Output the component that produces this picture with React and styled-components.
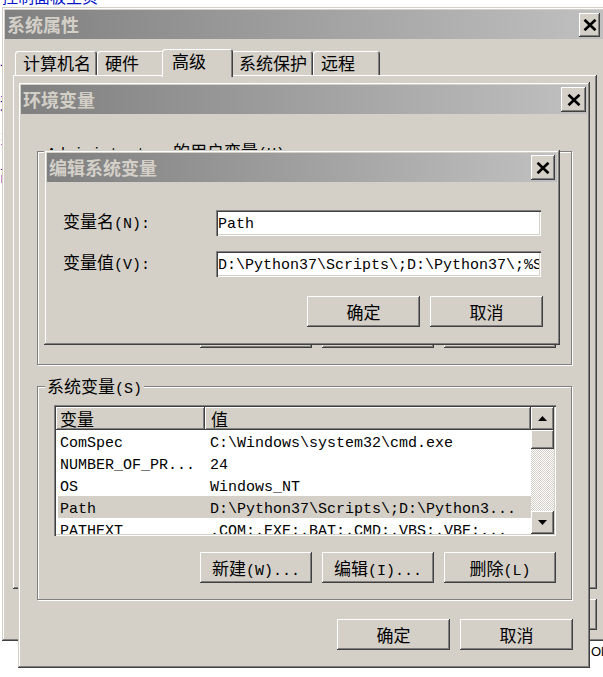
import React from "react";
import styled, { createGlobalStyle } from "styled-components";

const FACE = "#d4d0c8";
const CJK = `"Noto Sans CJK SC", "Noto Sans CJK JP", sans-serif`;
const MONO = `"Liberation Mono", "Noto Sans CJK SC", monospace`;

const RAISED = `inset -1px -1px #404040, inset 1px 1px #fff, inset -2px -2px #808080, inset 2px 2px ${FACE}`;
const SUNKEN = `inset 1px 1px #808080, inset 2px 2px #404040, inset -1px -1px #fff, inset -2px -2px ${FACE}`;

const GlobalStyle = createGlobalStyle`
  *, *::before, *::after { box-sizing: border-box; }
  html, body { margin: 0; padding: 0; background: #fff; }
  body {
    width: 603px; height: 677px; overflow: hidden;
    font-family: ${MONO}; font-size: 15px; color: #000;
  }
`;

const Desktop = styled.div`
  position: relative;
  width: 603px;
  height: 677px;
  overflow: hidden;
  background: #fff;
`;

const Sidebar = styled.nav`
  display: flex;
  flex-direction: column;
  gap: 20px;
`;

const HomeLink = styled.a`
  display: block;
  margin: -12px 0 0 2px;
  height: 50px;
  font: 16px/16px ${CJK};
  color: #0a14c8;
`;

const SideLink = styled.a`
  display: block;
  font: 16px/16px ${CJK};
  color: #0a14c8;
`;

const StrayText = styled.span`
  position: absolute;
  left: 591px;
  top: 644px;
  font: 13px/16px "Liberation Sans", sans-serif;
  color: #000;
`;

const Window = styled.section`
  position: absolute;
  left: ${(p) => p.$x}px;
  top: ${(p) => p.$y}px;
  width: ${(p) => p.$w}px;
  height: ${(p) => p.$h}px;
  display: flex;
  flex-direction: column;
  padding: 3px;
  background: ${FACE};
  box-shadow: inset -1px -1px #404040, inset 1px 1px ${FACE}, inset -2px -2px #808080, inset 2px 2px #fff;
`;

const TitleBar = styled.header`
  flex: none;
  height: 29px;
  display: flex;
  align-items: center;
  justify-content: space-between;
  padding: 0 ${(p) => p.$padRight}px 0 2px;
  background: linear-gradient(to right, #808080, #c0c0c0);
`;

const Title = styled.h1`
  margin: 0;
  font: bold 18px/29px ${CJK};
  color: ${FACE};
`;

const CloseButton = styled.button`
  width: ${(p) => p.$w}px;
  height: ${(p) => p.$h}px;
  padding: 0;
  border: 0;
  display: flex;
  align-items: center;
  justify-content: center;
  background: ${FACE};
  box-shadow: ${RAISED};
`;

const Zh = styled.span`
  font-family: ${CJK};
  font-size: 17px;
`;

const PushButton = styled.button`
  flex: none;
  width: ${(p) => p.$w}px;
  height: 31px;
  padding: 0;
  border: 0;
  background: ${FACE};
  box-shadow: ${RAISED};
  font-family: ${MONO};
  font-size: 15px;
  line-height: 31px;
  color: #000;
  text-align: center;
  white-space: nowrap;
`;

const ButtonRow = styled.div`
  flex: none;
  display: flex;
  justify-content: flex-end;
  gap: 10px;
  margin-top: ${(p) => p.$mt}px;
  margin-right: ${(p) => p.$mr || 0}px;
`;

/* ---------- 系统属性 ---------- */
const SheetBody = styled.div`
  flex: 1;
  display: flex;
  flex-direction: column;
  padding: 0 7px 8px 8px;
`;

const TabStrip = styled.div`
  flex: none;
  height: 26px;
  margin-top: 10px;
  padding-left: 2px;
  display: flex;
  align-items: flex-end;
`;

const Tab = styled.div`
  position: relative;
  z-index: ${(p) => (p.$active ? 1 : 0)};
  height: ${(p) => (p.$active ? 28 : 24)}px;
  min-width: ${(p) => (p.$active ? 71 : 67)}px;
  margin: 0 ${(p) => (p.$active ? -2 : 0)}px ${(p) => (p.$active ? -2 : 0)}px;
  padding: ${(p) => (p.$active ? "0 8px 0 10px" : "0 6px 0 8px")};
  background: ${FACE};
  border-radius: 3px 3px 0 0;
  box-shadow: inset 1px 1px #fff, inset -1px 0 #404040, inset -2px 0 #808080;
  font: 17px/24px ${CJK};
  white-space: nowrap;
`;

const TabPanel = styled.div`
  flex: 1;
  background: ${FACE};
  box-shadow: ${RAISED};
`;

/* ---------- 环境变量 ---------- */
const EnvBody = styled.div`
  flex: 1;
  display: flex;
  flex-direction: column;
  padding: 37px 15px 15px 16px;
`;

const Group = styled.div`
  flex: none;
  margin-top: ${(p) => p.$mt || 0}px;
  border: 1px solid #808080;
  box-shadow: inset 1px 1px #fff, 1px 1px #fff;
  padding: 0 15px 16px 16px;
`;

const GroupLabel = styled.div`
  width: fit-content;
  height: 18px;
  margin: -10px 0 0 -9px;
  padding: 0 2px;
  background: ${FACE};
  line-height: 18px;
  white-space: nowrap;
`;

const ListView = styled.div`
  height: 131px;
  margin-top: 10px;
  padding: 2px;
  display: flex;
  background: #fff;
  box-shadow: ${SUNKEN};
`;

const ListMain = styled.div`
  flex: 1;
  min-width: 0;
  overflow: hidden;
`;

const HeaderRow = styled.div`
  display: grid;
  grid-template-columns: 149px 1fr;
  height: 23px;
`;

const HeaderCell = styled.div`
  padding-left: ${(p) => p.$pad}px;
  background: ${FACE};
  box-shadow: inset -1px -1px #404040, inset 1px 1px #fff, inset -2px -2px #808080;
  font: 17px/23px ${CJK};
`;

const Row = styled.div`
  display: grid;
  grid-template-columns: 148px 1fr;
  height: 22px;
  margin-left: 2px;
  background: ${(p) => (p.$selected ? FACE : "transparent")};
  white-space: nowrap;
`;

const Cell = styled.div`
  height: 22px;
  padding: 3px 0 0 ${(p) => p.$pad}px;
  line-height: 22px;
  overflow: hidden;
`;

const ScrollBar = styled.div`
  flex: none;
  width: 23px;
  display: flex;
  flex-direction: column;
`;

const ScrollButton = styled.div`
  flex: none;
  height: ${(p) => p.$h}px;
  display: flex;
  align-items: center;
  justify-content: center;
  background: ${FACE};
  box-shadow: ${RAISED};
`;

const ScrollTrack = styled.div`
  flex: 1;
  background: repeating-conic-gradient(#fff 0 25%, ${FACE} 0 50%) 0 0 / 2px 2px;
`;

/* ---------- 编辑系统变量 ---------- */
const EditBody = styled.div`
  flex: 1;
  display: flex;
  flex-direction: column;
  padding: 28px 14px 15px 16px;
`;

const FieldGrid = styled.div`
  display: grid;
  grid-template-columns: 153px 1fr;
  grid-auto-rows: 26px;
  row-gap: 15px;
  align-items: center;
  margin-right: 2px;
`;

const FieldLabel = styled.label`
  line-height: 26px;
  white-space: nowrap;
`;

const TextField = styled.input`
  width: 100%;
  height: 26px;
  margin: 0;
  border: 0;
  padding: 2px 2px 0;
  background: #fff;
  box-shadow: ${SUNKEN};
  font: 15px/22px ${MONO};
  color: #000;
  outline: none;
`;

const CloseGlyph = () => (
  <svg width="14" height="12" viewBox="0 0 14 12" aria-hidden="true">
    <path d="M1.5 0.8 L12.5 11.2 M12.5 0.8 L1.5 11.2" stroke="#000" strokeWidth="2.7" fill="none" />
  </svg>
);

const Arrow = ({ up }) => (
  <svg width="9" height="5" viewBox="0 0 9 5" aria-hidden="true">
    <polygon points={up ? "0,5 9,5 4.5,0" : "0,0 9,0 4.5,5"} fill="#000" />
  </svg>
);

const tabs = ["计算机名", "硬件", "高级", "系统保护", "远程"];

const systemVars = [
  ["ComSpec", "C:\\Windows\\system32\\cmd.exe"],
  ["NUMBER_OF_PR...", "24"],
  ["OS", "Windows_NT"],
  ["Path", "D:\\Python37\\Scripts\\;D:\\Python3..."],
  ["PATHEXT", ".COM;.EXE;.BAT;.CMD;.VBS;.VBE;..."],
];

const userVars = [
  ["Path", "C:\\Users\\Administrator\\AppData..."],
  ["TEMP", "%USERPROFILE%\\AppData\\Local\\Temp"],
  ["TMP", "%USERPROFILE%\\AppData\\Local\\Temp"],
];

function VarList({ rows, selected }) {
  return (
    <ListView>
      <ListMain>
        <HeaderRow>
          <HeaderCell $pad={4}>变量</HeaderCell>
          <HeaderCell $pad={6}>值</HeaderCell>
        </HeaderRow>
        {rows.map(([name, value]) => (
          <Row key={name} $selected={name === selected}>
            <Cell $pad={2}>{name}</Cell>
            <Cell $pad={4}>{value}</Cell>
          </Row>
        ))}
      </ListMain>
      <ScrollBar>
        <ScrollButton $h={23}><Arrow up /></ScrollButton>
        <ScrollButton $h={19} />
        <ScrollTrack />
        <ScrollButton $h={23}><Arrow /></ScrollButton>
      </ScrollBar>
    </ListView>
  );
}

function VarButtons() {
  return (
    <ButtonRow $mt={16}>
      <PushButton $w={112}><Zh>新建</Zh>(W)...</PushButton>
      <PushButton $w={112}><Zh>编辑</Zh>(I)...</PushButton>
      <PushButton $w={112}><Zh>删除</Zh>(L)</PushButton>
    </ButtonRow>
  );
}

export default function App() {
  return (
    <>
      <GlobalStyle />
      <Desktop>
        <Sidebar>
          <HomeLink>控制面板主页</HomeLink>
          <SideLink>设备管理器</SideLink>
          <SideLink>远程设置</SideLink>
          <SideLink>系统保护</SideLink>
          <SideLink>高级系统设置</SideLink>
        </Sidebar>
        <StrayText>Ol</StrayText>

        <Window $x={2} $y={7} $w={605} $h={634}>
          <TitleBar $padRight={4}>
            <Title>系统属性</Title>
            <CloseButton $w={21} $h={24} aria-label="关闭"><CloseGlyph /></CloseButton>
          </TitleBar>
          <SheetBody>
            <TabStrip>
              {tabs.map((t) => (
                <Tab key={t} $active={t === "高级"}>{t}</Tab>
              ))}
            </TabStrip>
            <TabPanel />
            <ButtonRow $mt={10}>
              <PushButton $w={113}><Zh>确定</Zh></PushButton>
              <PushButton $w={113}><Zh>取消</Zh></PushButton>
              <PushButton $w={113}><Zh>应用</Zh>(A)</PushButton>
            </ButtonRow>
          </SheetBody>
        </Window>

        <Window $x={18} $y={82} $w={572} $h={586}>
          <TitleBar $padRight={1}>
            <Title>环境变量</Title>
            <CloseButton $w={25} $h={25} aria-label="关闭"><CloseGlyph /></CloseButton>
          </TitleBar>
          <EnvBody>
            <Group>
              <GroupLabel>Administrator <Zh>的用户变量</Zh>(U)</GroupLabel>
              <VarList rows={userVars} />
              <VarButtons />
            </Group>
            <Group $mt={21}>
              <GroupLabel><Zh>系统变量</Zh>(S)</GroupLabel>
              <VarList rows={systemVars} selected="Path" />
              <VarButtons />
            </Group>
            <ButtonRow $mt={19} $mr={-1}>
              <PushButton $w={113}><Zh>确定</Zh></PushButton>
              <PushButton $w={113}><Zh>取消</Zh></PushButton>
            </ButtonRow>
          </EnvBody>
        </Window>

        <Window $x={44} $y={150} $w={516} $h={195}>
          <TitleBar $padRight={2}>
            <Title>编辑系统变量</Title>
            <CloseButton $w={24} $h={25} aria-label="关闭"><CloseGlyph /></CloseButton>
          </TitleBar>
          <EditBody>
            <FieldGrid>
              <FieldLabel htmlFor="var-name"><Zh>变量名</Zh>(N):</FieldLabel>
              <TextField id="var-name" readOnly value="Path" />
              <FieldLabel htmlFor="var-value"><Zh>变量值</Zh>(V):</FieldLabel>
              <TextField
                id="var-value"
                readOnly
                value="D:\Python37\Scripts\;D:\Python37\;%SystemRoot%\system32;%SystemRoot%"
              />
            </FieldGrid>
            <ButtonRow $mt={19}>
              <PushButton $w={113}><Zh>确定</Zh></PushButton>
              <PushButton $w={113}><Zh>取消</Zh></PushButton>
            </ButtonRow>
          </EditBody>
        </Window>
      </Desktop>
    </>
  );
}
